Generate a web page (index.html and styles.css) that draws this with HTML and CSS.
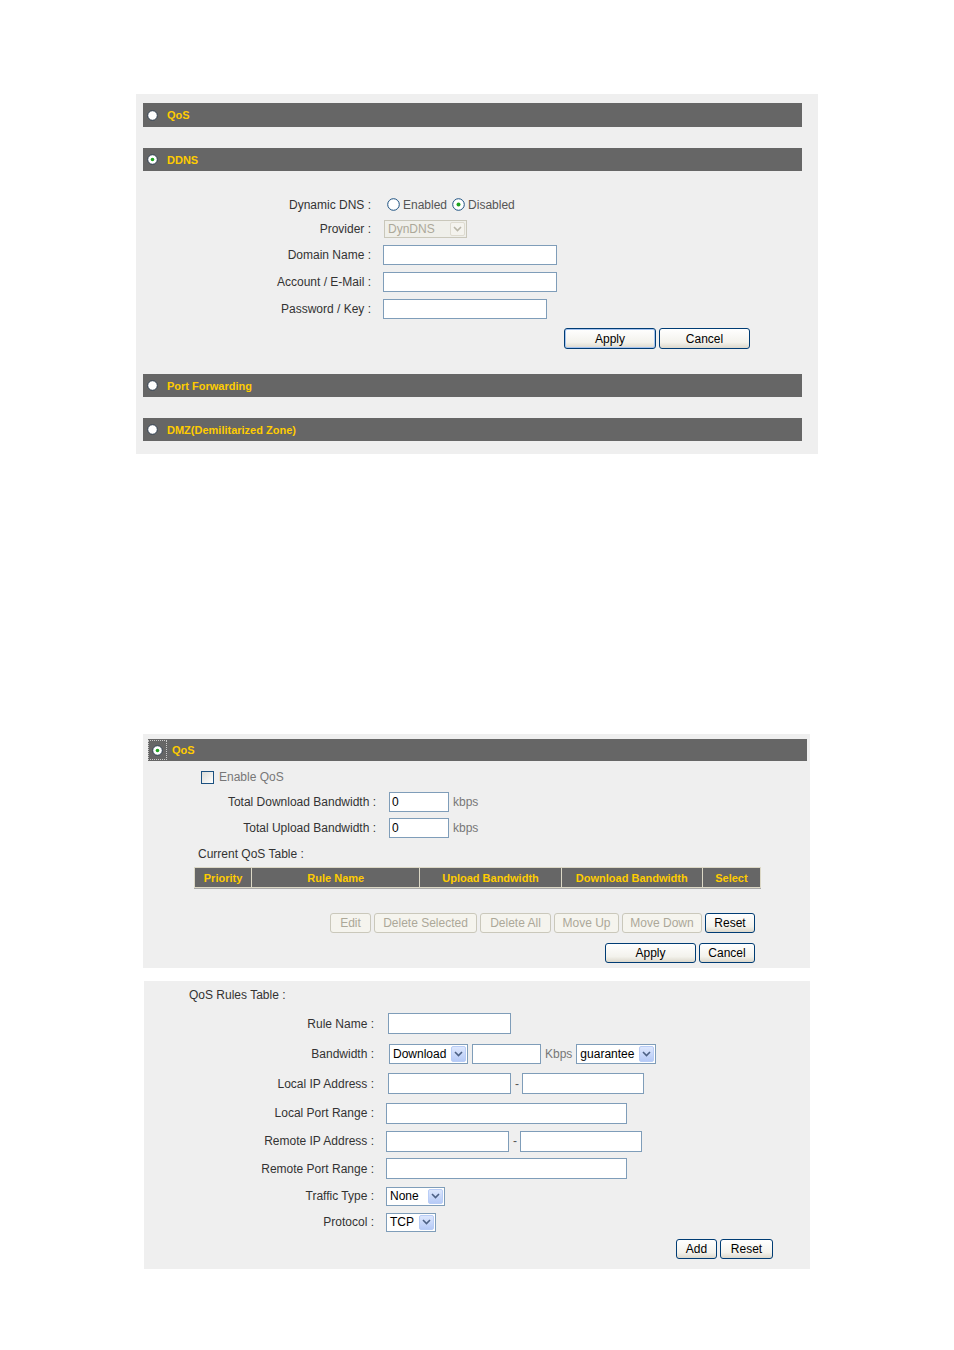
FILE: index.html
```html
<!DOCTYPE html>
<html lang="en">
<head>
    <meta charset="UTF-8">
    <meta name="viewport" content="width=device-width, initial-scale=1.0">
    <title>Advanced Settings</title>
    <link rel="stylesheet" href="styles.css">
</head>
<body>
    <div class="panel panel-ddns">
        <div class="bar bar-first">
            <span class="dot"><svg width="11" height="11" viewBox="0 0 11 11"><circle cx="5.5" cy="5.5" r="4.8" fill="#fff" stroke="#2e3d4f"/></svg></span>QoS
        </div>
        <div class="bar bar-gap">
            <span class="dot"><svg width="11" height="11" viewBox="0 0 11 11"><circle cx="5.5" cy="5.5" r="4.8" fill="#fff" stroke="#2e3d4f"/><circle cx="5.5" cy="5.5" r="1.8" fill="#1fa31f"/></svg></span>DDNS
        </div>

        <div class="form form-ddns">
            <label>Dynamic DNS :</label>
            <div class="opts">
                <span class="radio"><svg width="13" height="13" viewBox="0 0 13 13"><circle cx="6.5" cy="6.5" r="5.8" fill="#fff" stroke="#1c5180"/></svg></span>
                <span class="opt-text">Enabled</span>
                <span class="radio"><svg width="13" height="13" viewBox="0 0 13 13"><circle cx="6.5" cy="6.5" r="5.8" fill="#fff" stroke="#1c5180"/><circle cx="6.5" cy="6.5" r="2" fill="#1fa31f"/></svg></span>
                <span class="opt-text">Disabled</span>
            </div>

            <label>Provider :</label>
            <div><span class="select select-provider disabled"><span class="sel-text">DynDNS</span><span class="arrow"><svg width="9" height="6" viewBox="0 0 9 6"><path d="M1 1 L4.5 4.5 L8 1" fill="none" stroke="#b9b6a8" stroke-width="1.6"/></svg></span></span></div>

            <label>Domain Name :</label>
            <div><input class="field in-wide" type="text"></div>

            <label>Account / E-Mail :</label>
            <div><input class="field in-wide" type="text"></div>

            <label>Password / Key :</label>
            <div><input class="field in-pass" type="text"></div>
        </div>

        <div class="btns btns-ddns">
            <button class="btn btn-default w-92">Apply</button>
            <button class="btn w-91">Cancel</button>
        </div>

        <div class="bar bar-port">
            <span class="dot"><svg width="11" height="11" viewBox="0 0 11 11"><circle cx="5.5" cy="5.5" r="4.8" fill="#fff" stroke="#2e3d4f"/></svg></span>Port Forwarding
        </div>
        <div class="bar bar-dmz">
            <span class="dot"><svg width="11" height="11" viewBox="0 0 11 11"><circle cx="5.5" cy="5.5" r="4.8" fill="#fff" stroke="#2e3d4f"/></svg></span>DMZ(Demilitarized Zone)
        </div>
    </div>

    <div class="panel panel-qos">
        <div class="bar bar-qos">
            <span class="focus"><svg width="11" height="11" viewBox="0 0 11 11"><circle cx="5.5" cy="5.5" r="4.8" fill="#fff" stroke="#2e3d4f"/><circle cx="5.5" cy="5.5" r="1.8" fill="#1fa31f"/></svg></span>QoS
        </div>

        <div class="enable">
            <span class="check"></span>
            <span class="muted">Enable QoS</span>
        </div>

        <div class="form form-bw">
            <label>Total Download Bandwidth :</label>
            <div class="value"><input class="field in-small" type="text" value="0"><span class="muted">kbps</span></div>

            <label>Total Upload Bandwidth :</label>
            <div class="value"><input class="field in-small" type="text" value="0"><span class="muted">kbps</span></div>
        </div>

        <div class="caption">Current QoS Table :</div>

        <table class="qos-table">
            <tr>
                <th class="c-pri">Priority</th>
                <th class="c-name">Rule Name</th>
                <th class="c-up">Upload Bandwidth</th>
                <th class="c-down">Download Bandwidth</th>
                <th class="c-sel">Select</th>
            </tr>
        </table>

        <div class="btns btns-table">
            <button class="btn w-41" disabled>Edit</button>
            <button class="btn w-103" disabled>Delete Selected</button>
            <button class="btn w-71" disabled>Delete All</button>
            <button class="btn w-65" disabled>Move Up</button>
            <button class="btn w-80" disabled>Move Down</button>
            <button class="btn w-50">Reset</button>
        </div>

        <div class="btns btns-apply">
            <button class="btn w-91">Apply</button>
            <button class="btn w-56">Cancel</button>
        </div>
    </div>

    <div class="panel panel-rules">
        <div class="rules-title">QoS Rules Table :</div>

        <div class="form form-rules">
            <label>Rule Name :</label>
            <div class="value shift-2"><input class="field in-rule" type="text"></div>

            <label>Bandwidth :</label>
            <div class="value shift-3">
                <span class="select select-dir"><span class="sel-text">Download</span><span class="arrow"><svg width="9" height="6" viewBox="0 0 9 6"><path d="M1 1 L4.5 4.5 L8 1" fill="none" stroke="#4d6185" stroke-width="1.6"/></svg></span></span>
                <input class="field in-kbps" type="text">
                <span class="muted">Kbps</span>
                <span class="select select-mode"><span class="sel-text">guarantee</span><span class="arrow"><svg width="9" height="6" viewBox="0 0 9 6"><path d="M1 1 L4.5 4.5 L8 1" fill="none" stroke="#4d6185" stroke-width="1.6"/></svg></span></span>
            </div>

            <label>Local IP Address :</label>
            <div class="value shift-2"><input class="field in-ip" type="text"><span class="dash">-</span><input class="field in-ip2" type="text"></div>

            <label>Local Port Range :</label>
            <div class="value"><input class="field in-port" type="text"></div>

            <label>Remote IP Address :</label>
            <div class="value"><input class="field in-ip" type="text"><span class="dash">-</span><input class="field in-ip2" type="text"></div>

            <label>Remote Port Range :</label>
            <div class="value"><input class="field in-port" type="text"></div>

            <label>Traffic Type :</label>
            <div class="value">
                <span class="select select-type"><span class="sel-text">None</span><span class="arrow"><svg width="9" height="6" viewBox="0 0 9 6"><path d="M1 1 L4.5 4.5 L8 1" fill="none" stroke="#4d6185" stroke-width="1.6"/></svg></span></span>
            </div>

            <label>Protocol :</label>
            <div class="value">
                <span class="select select-proto"><span class="sel-text">TCP</span><span class="arrow"><svg width="9" height="6" viewBox="0 0 9 6"><path d="M1 1 L4.5 4.5 L8 1" fill="none" stroke="#4d6185" stroke-width="1.6"/></svg></span></span>
            </div>
        </div>

        <div class="btns btns-add">
            <button class="btn w-41">Add</button>
            <button class="btn w-53">Reset</button>
        </div>
    </div>
</body>
</html>
```

FILE: styles.css
```css
* {
    box-sizing: border-box;
}
body {
    margin: 0;
    background: #fff;
    color: #333;
    font-family: "Liberation Sans", Arial, sans-serif;
    font-size: 12px;
}
.panel {
    background: #efefef;
}

/* section header bars */
.bar {
    height: 23px;
    background: #666;
    color: #fc0;
    font-size: 11px;
    font-weight: bold;
    display: flex;
    align-items: center;
    padding-left: 4px;
}
.bar .dot {
    display: flex;
    width: 11px;
    height: 11px;
    margin-right: 9px;
}
.bar-first {
    height: 24px;
}
.bar-gap {
    margin-top: 21px;
}
.bar-port {
    margin-top: 25px;
}
.bar-dmz {
    margin-top: 21px;
}

/* form grids */
.form {
    display: grid;
    align-items: center;
}
.form label {
    text-align: right;
    white-space: nowrap;
}
.value {
    display: flex;
    align-items: center;
    gap: 4px;
}
.muted {
    color: #777;
}
.field {
    height: 20px;
    border: 1px solid #7f9db9;
    background: #fff;
    padding: 0 2px;
    font: 12px "Liberation Sans", Arial, sans-serif;
    color: #000;
    margin: 0;
}

/* fake selects */
.select {
    display: inline-flex;
    align-items: center;
    justify-content: space-between;
    height: 20px;
    border: 1px solid #7f9db9;
    background: #fff;
    color: #000;
    padding: 1px 1px 1px 3px;
    vertical-align: middle;
}
.sel-text {
    font-size: 12px;
}
.arrow {
    display: flex;
    align-items: center;
    justify-content: center;
    width: 15px;
    height: 100%;
    border: 1px solid #b9cdf6;
    border-radius: 2px;
    background: linear-gradient(#dde7fd, #b6caf6);
}
.select.disabled {
    border-color: #c9c7ba;
    background: #efefea;
    color: #aca899;
}
.select.disabled .arrow {
    border-color: #dedbd0;
    background: #f4f3ee;
}

/* buttons */
.btns {
    display: flex;
    gap: 3px;
}
.btn {
    height: 20px;
    padding: 0;
    border: 1px solid #003c74;
    border-radius: 3px;
    background: linear-gradient(#fff, #f3f2ec 70%, #dcd8cc);
    color: #000;
    font: 12px "Liberation Sans", Arial, sans-serif;
}
.btn-default {
    box-shadow: inset 0 0 0 1px #a6c4ef;
}
.btn:disabled {
    border-color: #cac8bb;
    background: #f5f4ee;
    color: #aca899;
}
.w-41 { width: 41px; }
.w-50 { width: 50px; }
.w-53 { width: 53px; }
.w-56 { width: 56px; }
.w-65 { width: 65px; }
.w-71 { width: 71px; }
.w-80 { width: 80px; }
.w-91 { width: 91px; }
.w-92 { width: 92px; }
.w-103 { width: 103px; }

/* DDNS panel */
.panel-ddns {
    width: 682px;
    margin: 94px 0 0 136px;
    padding: 9px 16px 13px 7px;
}
.form-ddns {
    grid-template-columns: 228px 1fr;
    grid-template-rows: 25px 24px 27px 27px 27px;
    column-gap: 12px;
    margin-top: 21px;
}
.opts {
    display: flex;
    align-items: center;
    padding-left: 4px;
    color: #555;
}
.radio {
    display: flex;
    width: 13px;
    height: 13px;
    margin-right: 3px;
}
.opt-text {
    margin-right: 5px;
    padding-top: 1px;
}
.select-provider {
    width: 83px;
    height: 18px;
    margin-left: 1px;
}
.in-wide {
    width: 174px;
}
.in-pass {
    width: 164px;
}
.btns-ddns {
    margin-top: 6px;
    padding-left: 421px;
}
.btns-ddns .btn {
    height: 21px;
}

/* QoS panel */
.panel-qos {
    width: 667px;
    margin: 280px 0 0 143px;
    padding: 5px 3px 5px 5px;
}
.bar-qos {
    height: 22px;
    padding-left: 0;
}
.focus {
    display: flex;
    align-items: center;
    justify-content: center;
    width: 19px;
    height: 20px;
    border: 1px dotted #c8c8c8;
    margin-right: 5px;
}
.enable {
    display: flex;
    align-items: center;
    height: 20px;
    margin-top: 6px;
    padding-left: 53px;
}
.check {
    width: 13px;
    height: 13px;
    border: 1px solid #1c5180;
    background: linear-gradient(135deg, #dcdcd7, #fff);
    margin-right: 5px;
}
.form-bw {
    grid-template-columns: 228px 1fr;
    grid-template-rows: 26px 26px;
    column-gap: 13px;
    margin-top: 2px;
}
.in-small {
    width: 60px;
}
.caption {
    height: 20px;
    line-height: 20px;
    margin-top: 3px;
    padding-left: 50px;
}
.qos-table {
    width: 567px;
    margin: 3px 0 0 46px;
    border-collapse: separate;
    border-spacing: 1px;
    background: #dcd8c6;
    box-shadow: 0 1px 0 #a9a9a9;
}
.qos-table th {
    height: 19px;
    padding: 0;
    background: #666;
    color: #fc0;
    font-weight: bold;
    font-size: 11px;
    text-align: center;
}
.c-pri { width: 56px; }
.c-name { width: 167px; }
.c-up { width: 140px; }
.c-down { width: 140px; }
.c-sel { width: 57px; }
.btns-table {
    justify-content: flex-end;
    margin: 25px 52px 0 0;
}
.btns-apply {
    justify-content: flex-end;
    margin: 10px 52px 0 0;
}

/* QoS rules panel */
.panel-rules {
    width: 666px;
    margin: 13px 0 0 144px;
    padding: 1px 37px 6px 0;
}
.rules-title {
    height: 27px;
    line-height: 27px;
    padding-left: 45px;
}
.form-rules {
    grid-template-columns: 230px 1fr;
    grid-template-rows: 29px 31px 29px 30px 26px 29px 26px 26px;
    column-gap: 12px;
}
.shift-2 {
    padding-left: 2px;
}
.shift-3 {
    padding-left: 3px;
}
.in-rule,
.in-ip {
    width: 123px;
    height: 21px;
}
.in-ip2 {
    width: 122px;
    height: 21px;
}
.in-port {
    width: 241px;
    height: 21px;
}
.in-kbps {
    width: 69px;
}
.dash {
    width: 3px;
    color: #555;
}
.select-dir {
    width: 79px;
}
.select-mode {
    width: 80px;
}
.select-type {
    width: 59px;
    height: 19px;
}
.select-proto {
    width: 50px;
    height: 19px;
}
.btns-add {
    justify-content: flex-end;
    align-items: center;
    height: 28px;
}
```
